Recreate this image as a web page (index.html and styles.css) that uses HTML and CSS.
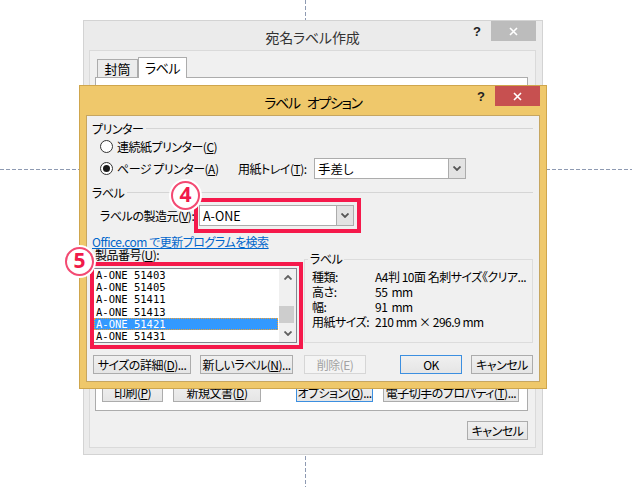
FILE: index.html
```html
<!DOCTYPE html>
<html lang="ja">
<head>
<meta charset="utf-8">
<title>ラベル オプション</title>
<link rel="stylesheet" href="styles.css">
</head>
<body>
<div class="desk">
  <div class="guide guide-v"></div>
  <div class="guide guide-h"></div>

  <div class="win win-back">
    <div class="titlebar">
      <span class="title">宛名ラベル作成</span>
      <div class="tb-ctrl">
        <span class="help">?</span>
        <span class="close close-gray"><svg width="9" height="9" viewBox="0 0 9 9"><path d="M1 1 L8 8 M8 1 L1 8" stroke="#fff" stroke-width="1.6"/></svg></span>
      </div>
    </div>
    <div class="panel">
      <div class="tabs">
        <div class="tab">封筒</div>
        <div class="tab tab-on">ラベル</div>
      </div>
      <div class="tabbody">
        <div class="backbtns">
          <button class="btn bb-print">印刷(<u>P</u>)</button>
          <button class="btn bb-new">新規文書(<u>D</u>)</button>
          <button class="btn btn-default bb-opt">オプション(<u>O</u>)...</button>
          <button class="btn bb-prop">電子切手のプロパティ(<u>T</u>)...</button>
        </div>
      </div>
      <div class="backfoot">
        <button class="btn bb-cancel">キャンセル</button>
      </div>
    </div>
  </div>

  <div class="win win-front">
    <div class="titlebar">
      <span class="title">ラベル オプション</span>
      <div class="tb-ctrl">
        <span class="help">?</span>
        <span class="close close-red"><svg width="9" height="9" viewBox="0 0 9 9"><path d="M1 1 L8 8 M8 1 L1 8" stroke="#fff" stroke-width="1.6"/></svg></span>
      </div>
    </div>
    <div class="client">
      <div class="grouphead"><span>プリンター</span><i class="rule"></i></div>
      <div class="row r1">
        <span class="radio"></span><span class="rtext">連続紙プリンター(<u>C</u>)</span>
      </div>
      <div class="row r2">
        <div class="radio-item"><span class="radio on"></span><span class="rtext">ページ プリンター(<u>A</u>)</span></div>
        <span class="tray-label">用紙トレイ(<u>T</u>):</span>
        <div class="combo combo-tray">
          <span class="combo-text">手差し</span>
          <span class="combo-btn"><svg width="8" height="5" viewBox="0 0 8 5"><path d="M0.5 0.5 L4 4 L7.5 0.5" fill="none" stroke="#555" stroke-width="1.8"/></svg></span>
        </div>
      </div>
      <div class="grouphead gh2"><span>ラベル</span><i class="rule"></i></div>
      <div class="row r3">
        <span class="maker-label">ラベルの製造元(<u>V</u>):</span>
        <div class="mark">
          <div class="combo combo-maker">
            <span class="combo-text">A-ONE</span>
            <span class="combo-btn"><svg width="8" height="5" viewBox="0 0 8 5"><path d="M0.5 0.5 L4 4 L7.5 0.5" fill="none" stroke="#555" stroke-width="1.8"/></svg></span>
          </div>
          <span class="redbox rb-maker"></span>
          <span class="badge badge4">4</span>
        </div>
      </div>
      <a class="link" href="#">Office.com で更新プログラムを検索</a>
      <div class="lower">
        <div class="prodcol">
          <div class="prodlabel">製品番号(<u>U</u>):</div>
          <div class="mark">
            <div class="listbox">
              <div class="items">
                <div class="item">A-ONE 51403</div>
                <div class="item">A-ONE 51405</div>
                <div class="item">A-ONE 51411</div>
                <div class="item">A-ONE 51413</div>
                <div class="item sel">A-ONE 51421</div>
                <div class="item">A-ONE 51431</div>
              </div>
              <div class="vscroll">
                <span class="sarrow"><svg width="8" height="5" viewBox="0 0 8 5"><path d="M0.5 4.5 L4 1 L7.5 4.5" fill="none" stroke="#606060" stroke-width="1.8"/></svg></span>
                <span class="track"><span class="thumb"></span></span>
                <span class="sarrow"><svg width="8" height="5" viewBox="0 0 8 5"><path d="M0.5 0.5 L4 4 L7.5 0.5" fill="none" stroke="#606060" stroke-width="1.8"/></svg></span>
              </div>
            </div>
            <span class="redbox rb-list"></span>
            <span class="badge badge5">5</span>
          </div>
        </div>
        <fieldset class="info">
          <legend>ラベル</legend>
          <div class="info-grid">
            <span>種類:</span><span>A4判 10面 名刺サイズ《クリア...</span>
            <span>高さ:</span><span class="val">55 mm</span>
            <span>幅:</span><span class="val">91 mm</span>
            <span>用紙サイズ:</span><span>210 mm × 296.9 mm</span>
          </div>
        </fieldset>
      </div>
      <div class="btnrow">
        <button class="btn fb-size">サイズの詳細(<u>D</u>)...</button>
        <button class="btn fb-new">新しいラベル(<u>N</u>)...</button>
        <button class="btn btn-disabled fb-del">削除(E)</button>
        <button class="btn btn-default fb-ok">OK</button>
        <button class="btn fb-cancel">キャンセル</button>
      </div>
    </div>
  </div>
</div>
</body>
</html>
```

FILE: styles.css
```css
body {
  margin: 0;
  background: #fff;
  font-family: "Noto Sans CJK JP", "Noto Sans", sans-serif;
  font-size: 12px;
  letter-spacing: -0.5px;
  color: #000;
  font-feature-settings: "palt";
}

.desk {
  position: relative;
  width: 632px;
  height: 487px;
  overflow: hidden;
}

.guide {
  position: absolute;
}
.guide-v {
  left: 305px;
  top: 0;
  width: 1px;
  height: 487px;
  background: repeating-linear-gradient(to bottom, #8e9ab2 0 4px, transparent 4px 6px);
}
.guide-h {
  left: 0;
  top: 169px;
  width: 632px;
  height: 1px;
  background: repeating-linear-gradient(to right, #8e9ab2 0 4px, transparent 4px 6px);
}

.win {
  position: absolute;
  box-sizing: border-box;
  display: flex;
  flex-direction: column;
}

.win-back {
  left: 83px;
  top: 20px;
  width: 460px;
  height: 435px;
  background: #ebebeb;
  border: 1px solid #d3d3d3;
  padding: 0 6px 6px 5px;
}

.win-front {
  left: 79px;
  top: 85px;
  width: 468px;
  height: 304px;
  background: #efc86b;
  border: 1px solid #cfa64d;
  padding: 0 6px 6px 6px;
}

.titlebar {
  height: 29px;
  flex: none;
  display: grid;
  grid-template-columns: 1fr auto 1fr;
  align-items: center;
}
.title {
  grid-column: 2;
  font-size: 14px;
  color: #000;
  padding-top: 2px;
  white-space: nowrap;
}
.win-back .title {
  color: #333;
  letter-spacing: -0.2px;
}
.win-front .title {
  letter-spacing: -1.3px;
  word-spacing: 5px;
}
.tb-ctrl {
  grid-column: 3;
  justify-self: end;
  align-self: start;
  display: flex;
  align-items: flex-start;
}
.help {
  font-family: "Liberation Sans", sans-serif;
  font-weight: bold;
  font-size: 13px;
  line-height: 14px;
  letter-spacing: 0;
  margin-top: 4px;
  margin-right: 10px;
  color: #222;
}
.close {
  width: 45px;
  height: 20px;
  display: flex;
  align-items: center;
  justify-content: center;
}
.close-gray {
  background: #bcbcbc;
}
.close-red {
  background: #c75050;
}

/* back window */
.panel {
  flex: 1;
  background: #f0f0f0;
  border: 1px solid #dadada;
  padding: 6px 7px 0 5px;
  display: flex;
  flex-direction: column;
}
.tabs {
  height: 20px;
  display: flex;
  align-items: flex-end;
  padding-left: 2px;
}
.tab {
  box-sizing: border-box;
  width: 41px;
  height: 18px;
  border: 1px solid #acacac;
  border-bottom: none;
  background: #ececec;
  text-align: center;
  line-height: 17px;
  font-size: 13px;
  letter-spacing: 0;
}
.tab-on {
  width: 49px;
  height: 21px;
  margin-bottom: -1px;
  background: #fff;
  position: relative;
  z-index: 1;
  line-height: 19px;
  letter-spacing: -0.5px;
}
.tabbody {
  box-sizing: border-box;
  height: 334px;
  background: #fff;
  border: 1px solid #acacac;
  display: flex;
  flex-direction: column;
  justify-content: flex-end;
  padding-bottom: 8px;
}
.backbtns {
  display: flex;
}
.backfoot {
  display: flex;
  justify-content: flex-end;
  margin-top: 10px;
}

.btn {
  box-sizing: border-box;
  height: 19px;
  padding: 0;
  margin: 0;
  border: 1px solid #acacac;
  background: linear-gradient(#f0f0f0, #e5e5e5);
  font-family: inherit;
  font-size: 12px;
  letter-spacing: -0.5px;
  font-feature-settings: "palt";
  line-height: 16px;
  color: #000;
  white-space: nowrap;
}
.btn-default {
  border-color: #3c8fe0;
}
.btn-disabled {
  color: #a3a3a3;
  border-color: #d6d6d6;
  background: #f4f4f4;
}

.bb-print { width: 61px; margin-left: 6px; }
.bb-new { width: 88px; margin-left: 10px; }
.bb-opt { width: 77px; margin-left: 35px; }
.bb-prop { width: 136px; margin-left: 10px; }
.bb-cancel { width: 61px; }

/* front window */
.client {
  flex: 1;
  background: #f0f0f0;
  border: 1px solid #c6a661;
  padding: 4px 6px 0 6px;
  display: flex;
  flex-direction: column;
}
.grouphead {
  height: 16px;
  display: flex;
  align-items: center;
  white-space: nowrap;
}
.grouphead span {
  margin-left: -1px;
}
.rule {
  flex: 1;
  height: 1px;
  background: #d5d5d5;
  margin-left: 3px;
}
.gh2 {
  margin-top: 5px;
}
.row {
  display: flex;
  align-items: center;
  white-space: nowrap;
}
.r1 {
  margin-top: 2px;
  height: 16px;
  padding-left: 7px;
}
.r2 {
  margin-top: 4px;
  height: 21px;
}
.radio-item {
  width: 145px;
  box-sizing: border-box;
  padding-left: 7px;
  display: flex;
  align-items: center;
}
.radio {
  box-sizing: border-box;
  width: 13px;
  height: 13px;
  border: 1px solid #333;
  border-radius: 50%;
  background: #fff;
  display: flex;
  align-items: center;
  justify-content: center;
}
.radio.on::after {
  content: "";
  width: 7px;
  height: 7px;
  border-radius: 50%;
  background: #1a1a1a;
}
.rtext {
  margin-left: 4px;
}
.tray-label {
  width: 76px;
}
.combo {
  box-sizing: border-box;
  height: 21px;
  border: 1px solid #acacac;
  background: #fff;
  display: flex;
}
.combo-tray {
  width: 152px;
}
.combo-maker {
  width: 155px;
}
.combo-text {
  flex: 1;
  padding-left: 3px;
  line-height: 19px;
  font-size: 12.5px;
  letter-spacing: 0;
}
.combo-btn {
  width: 17px;
  box-sizing: border-box;
  background: #e3e3e3;
  border-left: 1px solid #acacac;
  display: flex;
  align-items: center;
  justify-content: center;
}
.r3 {
  margin-top: 5px;
  height: 21px;
}
.maker-label {
  box-sizing: border-box;
  width: 106px;
  padding-left: 7px;
}
.mark {
  position: relative;
}
.redbox {
  position: absolute;
  border: 4px solid #f5194b;
  pointer-events: none;
}
.rb-maker {
  left: -5px;
  top: -7px;
  right: -7px;
  bottom: -7px;
}
.rb-list {
  left: -3px;
  top: -6px;
  right: -6px;
  bottom: -6px;
}
.badge {
  position: absolute;
  box-sizing: border-box;
  width: 29px;
  height: 29px;
  border-radius: 50%;
  border: 2px solid #f34a72;
  background: #fff;
  box-shadow: 0 0 0 2px #fff;
  color: #f01a4a;
  font-family: "Noto Sans", sans-serif;
  font-weight: bold;
  font-size: 21px;
  letter-spacing: 0;
  line-height: 1;
  display: flex;
  align-items: center;
  justify-content: center;
  padding-bottom: 2px;
  z-index: 2;
}
.badge4 {
  left: -28px;
  top: -24px;
}
.badge5 {
  left: -28px;
  top: -21px;
}
.link {
  margin-top: 8px;
  margin-left: -1px;
  height: 15px;
  line-height: 15px;
  color: #0066cc;
  text-decoration: underline;
  align-self: flex-start;
  white-space: nowrap;
}
.lower {
  display: flex;
  gap: 7px;
}
.prodcol {
  width: 204px;
}
.prodlabel {
  height: 12px;
  line-height: 12px;
  padding-left: 2px;
  margin-bottom: 7px;
  white-space: nowrap;
}
.listbox {
  box-sizing: border-box;
  height: 75px;
  border: 1px solid #828790;
  background: #fff;
  display: flex;
}
.items {
  flex: 1;
  padding-right: 1px;
}
.item {
  height: 12.2px;
  line-height: 12.2px;
  padding-left: 2px;
  font-family: "DejaVu Sans Mono", monospace;
  font-size: 10.5px;
  letter-spacing: 0;
  font-feature-settings: normal;
  white-space: nowrap;
}
.item.sel {
  background: #3399ff;
  color: #fff;
  outline: 1px dotted #f0a030;
  outline-offset: -1px;
}
.vscroll {
  width: 17px;
  background: #f0f0f0;
  display: flex;
  flex-direction: column;
}
.sarrow {
  height: 17px;
  display: flex;
  align-items: center;
  justify-content: center;
}
.track {
  flex: 1;
  display: flex;
  flex-direction: column;
}
.thumb {
  margin: 20px 2px 0 0;
  height: 17px;
  background: #cdcdcd;
}
.info {
  box-sizing: border-box;
  flex: 1;
  margin: 2px 0 0 0;
  height: 92px;
  border: 1px solid #dcdcdc;
  padding: 0 4px 0 3px;
  min-width: 0;
}
.info legend {
  padding: 0 2px;
  line-height: 16px;
  height: 16px;
}
.info-grid {
  padding-top: 2px;
  margin-left: 4px;
  display: grid;
  grid-template-columns: 63px auto;
  grid-auto-rows: 15px;
  line-height: 15px;
  white-space: nowrap;
}
.val {
  word-spacing: 2px;
}
.btnrow {
  margin-top: 12px;
  display: flex;
}
.fb-size { width: 98px; }
.fb-new { width: 93px; margin-left: 9px; }
.fb-del { width: 62px; margin-left: 11px; }
.fb-ok { width: 62px; margin-left: 34px; }
.fb-cancel { width: 62px; margin-left: 9px; }
```
